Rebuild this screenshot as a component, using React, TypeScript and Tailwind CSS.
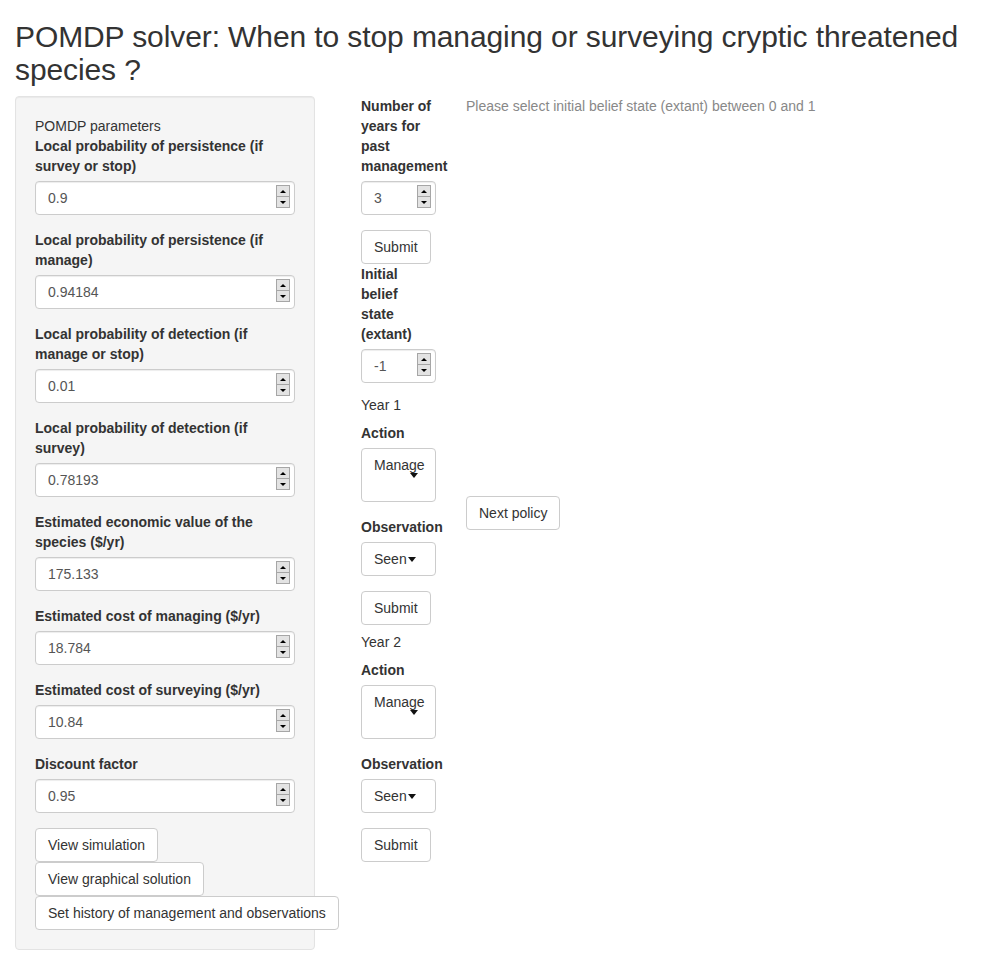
import React from "react";

const params = [
  { label: "Local probability of persistence (if survey or stop)", value: "0.9" },
  { label: "Local probability of persistence (if manage)", value: "0.94184" },
  { label: "Local probability of detection (if manage or stop)", value: "0.01" },
  { label: "Local probability of detection (if survey)", value: "0.78193" },
  { label: "Estimated economic value of the species ($/yr)", value: "175.133" },
  { label: "Estimated cost of managing ($/yr)", value: "18.784" },
  { label: "Estimated cost of surveying ($/yr)", value: "10.84" },
  { label: "Discount factor", value: "0.95" },
];

function Spinner() {
  return (
    <div className="pointer-events-none absolute right-[5px] top-[4px] flex w-[14px] flex-col">
      <span className="flex h-[12px] items-center justify-center border border-[#a6a6a6] bg-[#e3e3e3]">
        <span className="h-0 w-0 border-x-[3px] border-b-[3px] border-x-transparent border-b-black" />
      </span>
      <span className="flex h-[11px] items-center justify-center border border-t-0 border-[#a6a6a6] bg-[#e3e3e3]">
        <span className="h-0 w-0 border-x-[3px] border-t-[3px] border-x-transparent border-t-black" />
      </span>
    </div>
  );
}

function NumberInput({ value, className = "" }: { value: string; className?: string }) {
  return (
    <div className={`relative h-[34px] ${className}`}>
      <input
        type="text"
        readOnly
        defaultValue={value}
        className="h-[34px] w-full rounded-[4px] border border-[#ccc] bg-white px-[12px] py-[6px] text-[14px] leading-[20px] text-[#555] shadow-[inset_0_1px_1px_rgba(0,0,0,0.075)] outline-none"
      />
      <Spinner />
    </div>
  );
}

function Btn({ children, className = "" }: { children: React.ReactNode; className?: string }) {
  return (
    <button className={`h-[34px] whitespace-nowrap rounded-[4px] border border-[#ccc] bg-white px-[12px] text-[14px] leading-[20px] text-[#333] ${className}`}>
      {children}
    </button>
  );
}

function Caret() {
  return <span className="inline-block h-0 w-0 border-x-[4.5px] border-t-[5px] border-x-transparent border-t-[#111]" />;
}

function ActionSelect() {
  return (
    <div className="relative mt-[5px] h-[54px] w-[75px] rounded-[4px] border border-[#ccc] bg-white px-[12px] pt-[6px]">
      <span className="text-[#333]">Manage</span>
      <span className="absolute left-[48px] top-[24px] flex">
        <Caret />
      </span>
    </div>
  );
}

function ObsSelect() {
  return (
    <div className="mt-[5px] flex h-[34px] w-[75px] items-center rounded-[4px] border border-[#ccc] bg-white px-[12px]">
      <span className="text-[#333]">Seen</span>
      <span className="ml-[1px] flex">
        <Caret />
      </span>
    </div>
  );
}

function YearBlock({ year, topGap }: { year: number; topGap: string }) {
  return (
    <>
      <div className={topGap}>Year {year}</div>
      <div className="mt-[8px] font-bold">Action</div>
      <ActionSelect />
      <div className="mt-[15px] font-bold">Observation</div>
      <ObsSelect />
      <Btn className="mt-[15px]">Submit</Btn>
    </>
  );
}

export default function App() {
  return (
    <div className="min-h-screen bg-white px-[15px] font-['Liberation_Sans',Arial,sans-serif] text-[14px] leading-[20px] text-[#333]">
      <h2 className="mb-[10px] pt-[20px] text-[30px] font-normal leading-[33px] tracking-[-0.1px]">
        POMDP solver: When to stop managing or surveying cryptic threatened species ?
      </h2>

      <div className="flex items-start">
        {/* sidebar */}
        <div className="w-[300px] shrink-0 rounded-[4px] border border-[#e3e3e3] bg-[#f5f5f5] p-[19px] shadow-[inset_0_1px_1px_rgba(0,0,0,0.05)]">
          <div>POMDP parameters</div>
          {params.map((p) => (
            <div key={p.label} className="mb-[15px]">
              <div className="mb-[5px] font-bold">{p.label}</div>
              <NumberInput value={p.value} />
            </div>
          ))}
          <div className="flex flex-col items-start">
            <Btn>View simulation</Btn>
            <Btn>View graphical solution</Btn>
            <Btn>Set history of management and observations</Btn>
          </div>
        </div>

        {/* history column */}
        <div className="ml-[46px] flex w-[75px] shrink-0 flex-col items-start">
          <div className="w-[72px] font-bold">Number of years for past management</div>
          <NumberInput value="3" className="mt-[5px] w-[75px]" />
          <Btn className="mt-[15px]">Submit</Btn>
          <div className="w-[72px] font-bold">Initial belief state (extant)</div>
          <NumberInput value="-1" className="mt-[5px] w-[75px]" />
          <YearBlock year={1} topGap="mt-[12px]" />
          <YearBlock year={2} topGap="mt-[7px]" />
        </div>

        {/* policy column */}
        <div className="ml-[30px] flex flex-col items-start">
          <div className="text-[#888]">Please select initial belief state (extant) between 0 and 1</div>
          <Btn className="mt-[380px]">Next policy</Btn>
        </div>
      </div>
    </div>
  );
}
